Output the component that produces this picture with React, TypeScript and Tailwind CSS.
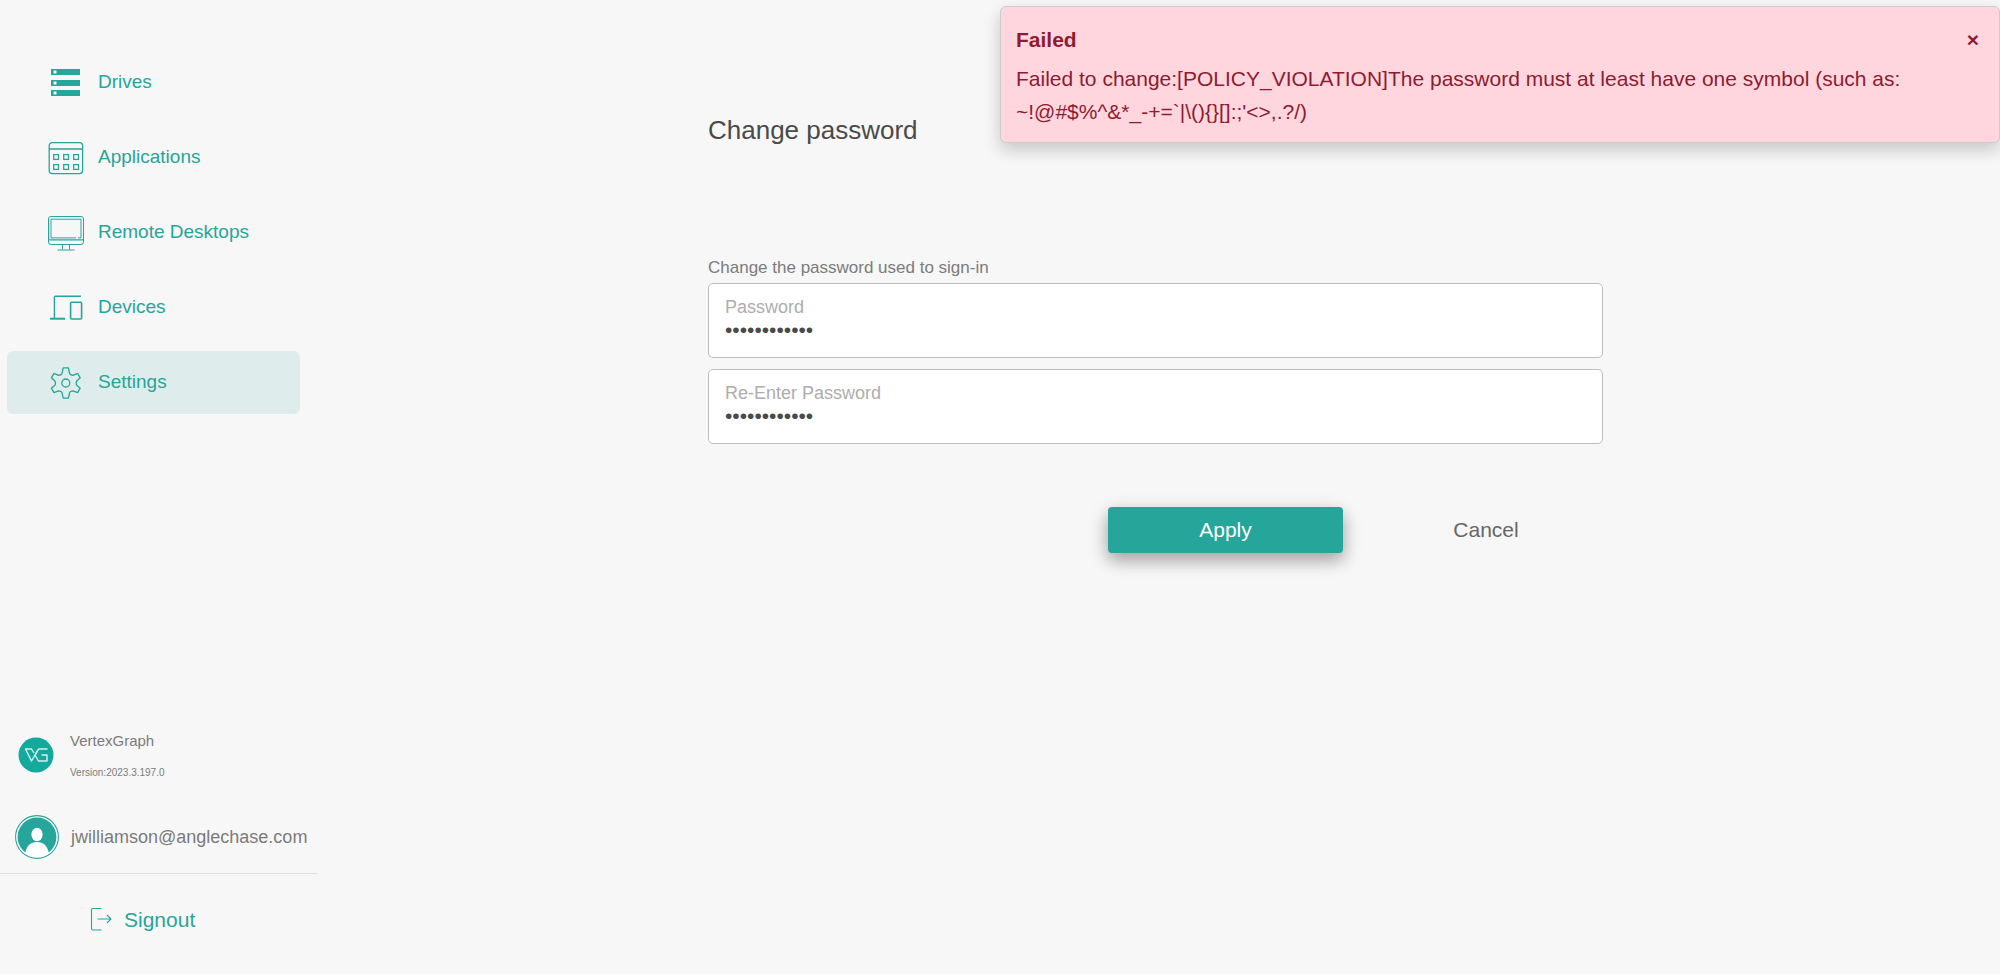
import { useState, type ReactNode } from 'react'

const DrivesIcon = () => (
  <svg width="36" height="36" viewBox="0 0 36 36">
    {[4, 15, 25].map((y) => (
      <g key={y}>
        <rect x="3" y={y} width="29" height="6" fill="#26a59a" />
        <rect x="5.5" y={y + 1.5} width="3" height="3" fill="#eef8f7" />
      </g>
    ))}
  </svg>
)

const ApplicationsIcon = () => (
  <svg width="36" height="36" viewBox="0 0 36 36" fill="none" stroke="#26a59a" strokeWidth="1.3">
    <rect x="1.2" y="2.6" width="33.4" height="31" rx="3" />
    <path d="M1 9h34" />
    {[14.6, 24.6].map((y) =>
      [5.7, 15.7, 25.7].map((x) => (
        <rect key={`${x}-${y}`} x={x} y={y} width="4.8" height="4.8" />
      ))
    )}
  </svg>
)

const DesktopIcon = () => (
  <svg width="36" height="36" viewBox="0 0 36 36" fill="none" stroke="#26a59a" strokeWidth="1">
    <rect x="0.5" y="1.5" width="35" height="28" rx="2.5" />
    <path d="M28 22.9H3V4.2h30v18.7h-3" />
    <path d="M2 4v20" stroke="#9ccfcb" />
    <path d="M0.5 24.8h35" strokeWidth="1.3" />
    <path d="M14.5 30v4.5M21.5 30v4.5M9.5 35h17" />
  </svg>
)

const DevicesIcon = () => (
  <svg width="36" height="36" viewBox="0 0 36 36" fill="none" stroke="#26a59a" strokeWidth="1.6">
    <path d="M33 6.3H7.2Q6.4 6.3 6.4 7.1V29" strokeWidth="1.4" />
    <path d="M2 28.7h15" strokeWidth="2" />
    <rect x="22.6" y="12.3" width="11" height="16.7" rx="1" />
  </svg>
)

const SettingsIcon = () => (
  <svg width="36" height="36" viewBox="0 0 36 36" fill="none" stroke="#26a59a" strokeWidth="1.3" strokeLinejoin="round">
    <circle cx="17.8" cy="18" r="4" />
    <path d="M15.2 2.9h5.2l1.2 5.6q.3 1.2 3.4 1.9l4.6-2 2.6 4.4-3.7 3.5q-.9 1.9 0 3.6l3.7 3.3-2.6 4.4-4.6-1.8q-3.1.5-3.4 1.8l-1.2 5.5h-5.2L14 27.6q-.3-1.3-3.4-1.8L6 27.6l-2.6-4.4 3.7-3.3q.9-1.7 0-3.6l-3.7-3.5L6 8.4l4.6 2q3.1-.7 3.4-1.9z" />
  </svg>
)

const LogoIcon = () => (
  <svg width="36" height="36" viewBox="0 0 36 36" fill="none">
    <circle cx="18" cy="18" r="17.5" fill="#14a99d" />
    <g stroke="#d6f1ee" strokeWidth="1.4" strokeLinejoin="round">
      <path d="M16 16l-2.500-4H7.500l6 12 7-12h9" />
      <path d="M20 13l-3 5 3.500 6h8.500v-6h-5.500" />
    </g>
  </svg>
)

const AvatarIcon = () => (
  <svg width="44" height="44" viewBox="0 0 44 44">
    <defs>
      <clipPath id="avatar">
        <circle cx="22" cy="22" r="20" />
      </clipPath>
    </defs>
    <circle cx="22" cy="22" r="21.4" fill="#fff" stroke="#26a59a" strokeWidth="1.1" />
    <circle cx="22" cy="22" r="19.4" fill="#26a59a" />
    <g fill="#fff" clipPath="url(#avatar)">
      <ellipse cx="22" cy="19.5" rx="5.6" ry="6.8" />
      <path d="M9.5 43Q10.5 27 22 27t12.5 16z" />
    </g>
  </svg>
)

const SignoutIcon = () => (
  <svg width="22" height="24" viewBox="0 0 22 24" fill="none" stroke="#26a59a" strokeWidth="1.1">
    <path d="M11.5 0.5H3Q1.5 0.5 1.5 2v18.500q0 1.500 1.500 1.500h8.500" />
    <path d="M7.5 11h13.500M17 7l4 4-4 4" />
  </svg>
)

const navItems = [
  { label: 'Drives', icon: <DrivesIcon /> },
  { label: 'Applications', icon: <ApplicationsIcon /> },
  { label: 'Remote Desktops', icon: <DesktopIcon /> },
  { label: 'Devices', icon: <DevicesIcon /> },
  { label: 'Settings', icon: <SettingsIcon />, active: true }
]

interface NavItemProps {
  label: string
  icon: ReactNode
  active?: boolean
}

function NavItem({ label, icon, active }: NavItemProps) {
  return (
    <a
      href="#"
      className={`flex h-[63px] items-center gap-3.5 rounded-md pl-[41px] text-[19px] text-[#26a59a] ${
        active ? 'bg-[#deedeb]' : ''
      }`}
    >
      {icon}
      {label}
    </a>
  )
}

function Sidebar() {
  return (
    <aside className="flex w-[318px] shrink-0 flex-col">
      <nav className="flex flex-col gap-3 pl-[7px] pr-[18px] pt-[51px]">
        {navItems.map((item) => (
          <NavItem key={item.label} {...item} />
        ))}
      </nav>

      <div className="mt-auto flex items-start gap-4 pl-[18px]">
        <LogoIcon />
        <div className="-mt-3 text-[#7b7b7b]">
          <p className="text-[15px] leading-8">VertexGraph</p>
          <p className="text-[10px] leading-8">Version:2023.3.197.0</p>
        </div>
      </div>

      <div className="mt-[26px] flex items-center gap-3 border-b border-[#dedede] pb-3.5 pl-[15px] text-[18px] text-[#7b7b7b]">
        <AvatarIcon />
        jwilliamson@anglechase.com
      </div>

      <button className="mb-9 mt-7 flex items-center gap-3 pl-[90px] text-[21px] leading-9 text-[#26a59a]">
        <SignoutIcon />
        Signout
      </button>
    </aside>
  )
}

interface PasswordFieldProps {
  id: string
  label: string
}

function PasswordField({ id, label }: PasswordFieldProps) {
  const [value, setValue] = useState('Password1234')

  return (
    <div className="flex h-[75px] flex-col rounded-[5px] border border-[#bdbdbd] bg-white px-4 pt-[11px]">
      <label htmlFor={id} className="text-[18px] leading-6 text-[#adadad]">
        {label}
      </label>
      <input
        id={id}
        type="password"
        value={value}
        onChange={(e) => setValue(e.target.value)}
        className="h-[22px] w-full text-[21px] leading-[22px] text-[#4a4a4a] outline-none"
      />
    </div>
  )
}

function ErrorToast({ onClose }: { onClose: () => void }) {
  return (
    <div
      role="alert"
      className="absolute right-0 top-1.5 w-1/2 rounded-md border border-[#cccccc] bg-[#ffd6dd] pb-3.5 pl-[15px] pr-4 pt-4 text-[21px] leading-[33px] text-[#8e1b30] shadow-[0_8px_16px_rgba(0,0,0,0.1),0_6px_20px_rgba(0,0,0,0.1)]"
    >
      <div className="flex items-center justify-between">
        <h2 className="font-bold">Failed</h2>
        <button aria-label="Close" onClick={onClose} className="px-1 font-bold leading-6">
          ×
        </button>
      </div>
      <p className="mt-1.5 pr-16">
        {"Failed to change:[POLICY_VIOLATION]The password must at least have one symbol (such as: ~!@#$%^&*_-+=`|\\(){}[]:;'<>,.?/)"}
      </p>
    </div>
  )
}

export default function App() {
  const [showError, setShowError] = useState(true)

  return (
    <div className="relative flex min-h-screen bg-[#f7f7f7] font-['Liberation_Sans',Arial,sans-serif]">
      <Sidebar />

      <main className="flex-1 pr-[7px] pt-28">
        <form className="mx-auto max-w-[895px]" onSubmit={(e) => e.preventDefault()}>
          <h1 className="text-[26px] leading-9 text-[#4a4a4a]">Change password</h1>
          <p className="mt-[108px] text-[17px] leading-6 text-[#7b7b7b]">Change the password used to sign-in</p>

          <div className="mt-[3px] flex flex-col gap-[11px]">
            <PasswordField id="password" label="Password" />
            <PasswordField id="confirm-password" label="Re-Enter Password" />
          </div>

          <div className="mt-[63px] flex justify-end gap-[26px] text-[21px]">
            <button
              type="submit"
              className="h-[46px] w-[235px] rounded bg-[#26a59a] text-white shadow-[0_8px_16px_rgba(0,0,0,0.2),0_6px_20px_rgba(0,0,0,0.19)]"
            >
              Apply
            </button>
            <button type="button" className="h-[46px] w-[234px] text-[#666666]">
              Cancel
            </button>
          </div>
        </form>
      </main>

      {showError && <ErrorToast onClose={() => setShowError(false)} />}
    </div>
  )
}
